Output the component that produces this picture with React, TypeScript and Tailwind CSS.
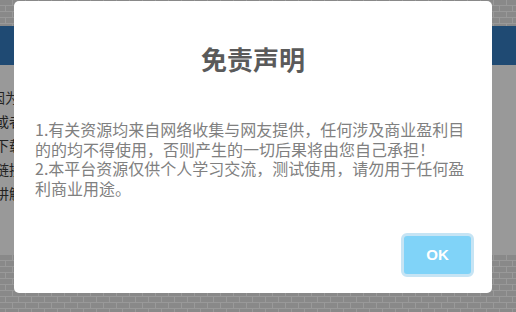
import React from 'react';

const cjk = { fontFamily: '"Microsoft YaHei", "Noto Sans CJK SC", "Liberation Sans", sans-serif' };

function Bricks({ className }: { className: string }) {
  return (
    <svg className={className} width="100%" xmlns="http://www.w3.org/2000/svg">
      <defs>
        <pattern id="brick" width="26" height="12" patternUnits="userSpaceOnUse">
          <rect width="26" height="12" fill="#ffffff" />
          <rect x="0" y="0" width="12" height="5" fill="#e4e4e4" />
          <rect x="13" y="0" width="12" height="5" fill="#e4e4e4" />
          <rect x="-7" y="6" width="12" height="5" fill="#e4e4e4" />
          <rect x="6" y="6" width="12" height="5" fill="#e4e4e4" />
          <rect x="19" y="6" width="12" height="5" fill="#e4e4e4" />
        </pattern>
      </defs>
      <rect width="100%" height="100%" fill="url(#brick)" />
    </svg>
  );
}

export default function App() {
  // only the first couple of characters show left of the dialog
  const lines = ['因为网', '或者', '下载', '链接', '讲解'];

  return (
    <div className="relative h-[312px] w-full overflow-hidden bg-white" style={cjk}>
      {/* Page behind the dialog */}
      <div className="flex h-full flex-col">
        <Bricks className="block h-[26px] shrink-0" />
        <div className="h-[39px] shrink-0 bg-[#347cc0]" />
        <div className="flex h-[190px] shrink-0 flex-col pt-[20px] text-[14px] leading-[24px] text-[#3a3a3a]">
          {lines.map((line, i) => (
            <div key={line} className={i === 0 ? 'ml-[-9px] whitespace-nowrap' : 'ml-[-5px] whitespace-nowrap'}>
              {line}
            </div>
          ))}
        </div>
        <Bricks className="block flex-1" />
      </div>

      {/* Overlay + dialog */}
      <div className="fixed inset-0 bg-black/40 pl-[14px] pt-[1px]">
        <div className="flex h-[292px] w-[478px] flex-col rounded-[5px] bg-white">
          <h2 className="pt-[42px] text-center text-[26px] font-semibold leading-[32px] text-[#5a5a5a]">
            免责声明
          </h2>
          <p className="mt-[45px] px-[21px] text-[16px] leading-[19.5px] text-[#808080]">
            1.有关资源均来自网络收集与网友提供，任何涉及商业盈利目的的均不得使用，否则产生的一切后果将由您自己承担！
            <br />
            2.本平台资源仅供个人学习交流，测试使用，请勿用于任何盈利商业用途。
          </p>
          <div className="mt-auto flex justify-end pb-[16px] pr-[18px]">
            <button
              className="flex h-[44px] w-[73px] items-center justify-center rounded-[6px] border-[3px] border-[#c6e4f4] bg-[#80d3f8] text-[15px] font-bold text-white"
              style={{ fontFamily: '"Liberation Sans", Arial, sans-serif' }}
            >
              OK
            </button>
          </div>
        </div>
      </div>
    </div>
  );
}
